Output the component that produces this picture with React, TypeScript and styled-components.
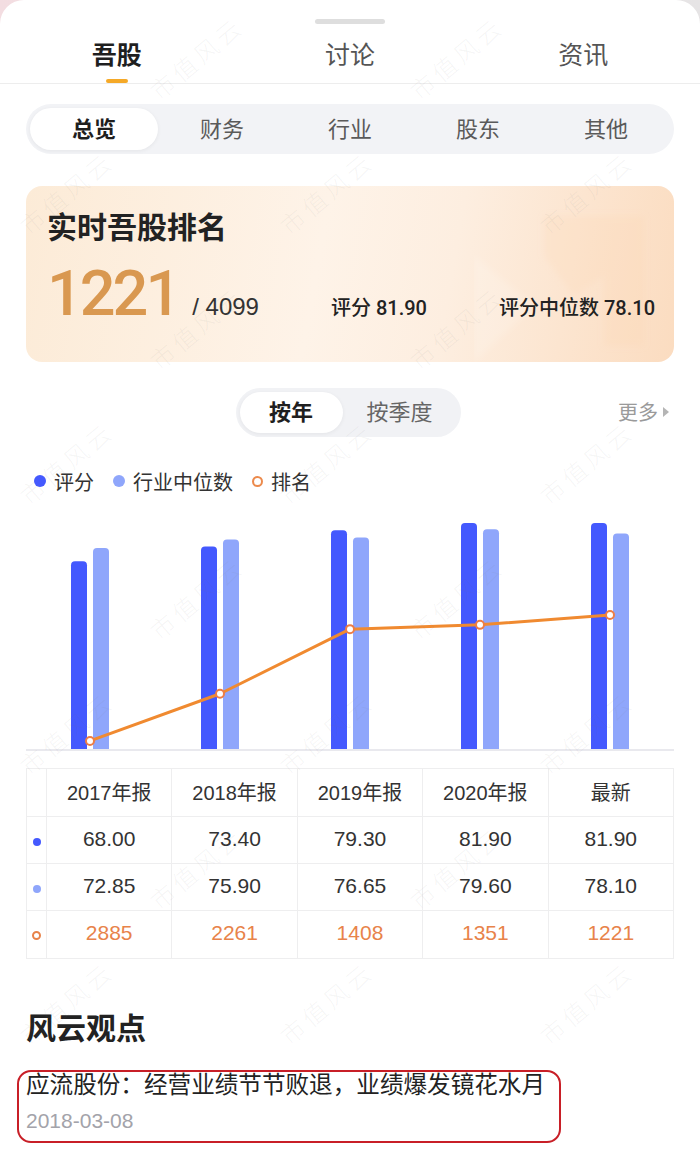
import React from 'react'
import styled, { createGlobalStyle } from 'styled-components'

const GlobalStyle = createGlobalStyle`
  html, body {
    margin: 0;
    padding: 0;
    background: linear-gradient(90deg, #f3dde1 0%, #efe6e8 50%, #e6e4e5 100%);
    font-family: "Liberation Sans", "Noto Sans CJK SC", sans-serif;
  }
  * { box-sizing: border-box; }
`

const Sheet = styled.div`
  position: relative;
  width: 700px;
  min-height: 1163px;
  background: #fff;
  border-radius: 24px 24px 0 0;
  padding-top: 19px;
  overflow: hidden;
`
const Handle = styled.div`
  width: 70px;
  height: 5px;
  margin: 0 auto;
  border-radius: 3px;
  background: #dedede;
`
const TabBar = styled.div`
  display: grid;
  grid-template-columns: repeat(3, 1fr);
  border-bottom: 1px solid #ededed;
`
const Tab = styled.div<{ active?: boolean }>`
  display: flex;
  flex-direction: column;
  align-items: center;
  padding-top: 14px;
  font-size: 25px;
  line-height: 34px;
  font-weight: ${p => (p.active ? 700 : 400)};
  color: ${p => (p.active ? '#1f1f1f' : '#555')};
`
const TabLine = styled.div<{ active?: boolean }>`
  width: 22px;
  height: 4px;
  margin-top: 7px;
  border-radius: 2px;
  background: ${p => (p.active ? '#f5a928' : 'transparent')};
`
const Segment = styled.div`
  display: grid;
  grid-template-columns: repeat(5, 1fr);
  height: 50px;
  margin: 20px 26px 0;
  padding: 4px;
  border-radius: 25px;
  background: #f2f3f6;
`
const SegItem = styled.div<{ active?: boolean }>`
  display: flex;
  align-items: center;
  justify-content: center;
  padding-bottom: 5px;
  border-radius: 21px;
  font-size: 22px;
  font-weight: ${p => (p.active ? 700 : 400)};
  color: ${p => (p.active ? '#1f1f1f' : '#5a5a5a')};
  background: ${p => (p.active ? '#fff' : 'transparent')};
  box-shadow: ${p => (p.active ? '0 1px 4px rgba(0,0,0,0.06)' : 'none')};
`
const RankCard = styled.div`
  position: relative;
  height: 176px;
  margin: 32px 26px 0;
  padding: 22px 19px 0 21px;
  border-radius: 16px;
  overflow: hidden;
  background: linear-gradient(100deg, #fcebd7 0%, #fef3e8 45%, #fdeee0 65%, #fbdcc0 100%);
`
const CardDeco = styled.svg`
  position: absolute;
  right: 0;
  top: 0;
`
const CardTitle = styled.div`
  position: relative;
  font-size: 30px;
  line-height: 40px;
  font-weight: 700;
  color: #222;
`
const CardRow = styled.div`
  position: relative;
  display: flex;
  align-items: baseline;
  justify-content: space-between;
  margin-top: 15px;
`
const RankGroup = styled.div`
  display: flex;
  align-items: baseline;
`
const RankNum = styled.span`
  font-family: Roboto, "Liberation Sans", sans-serif;
  font-size: 63px;
  line-height: 62px;
  font-weight: 500;
  letter-spacing: -3px;
  color: #d99850;
`
const RankTotal = styled.span`
  margin-left: 14px;
  font-size: 24px;
  color: #333;
`
const Stat = styled.span`
  font-family: Roboto, "Noto Sans CJK SC", sans-serif;
  font-size: 20px;
  font-weight: 500;
  color: #222;
`
const ToggleRow = styled.div`
  display: grid;
  grid-template-columns: 1fr auto 1fr;
  align-items: center;
  margin-top: 26px;
  padding: 0 30px 0 26px;
`
const Toggle = styled.div`
  grid-column: 2;
  display: flex;
  height: 49px;
  padding: 4px;
  border-radius: 25px;
  background: #f1f2f5;
`
const ToggleItem = styled.div<{ active?: boolean; w: number }>`
  display: flex;
  align-items: center;
  justify-content: center;
  width: ${p => p.w}px;
  padding-bottom: 5px;
  border-radius: 21px;
  font-size: 22px;
  font-weight: ${p => (p.active ? 700 : 400)};
  color: ${p => (p.active ? '#1f1f1f' : '#666')};
  background: ${p => (p.active ? '#fff' : 'transparent')};
  box-shadow: ${p => (p.active ? '0 1px 4px rgba(0,0,0,0.06)' : 'none')};
`
const More = styled.div`
  justify-self: end;
  display: flex;
  align-items: center;
  gap: 4px;
  padding-bottom: 2px;
  font-size: 20px;
  color: #9a9a9a;
`
const Legend = styled.div`
  display: flex;
  align-items: center;
  height: 24px;
  margin-top: 32px;
  padding-left: 34px;
  gap: 19px;
`
const LegendItem = styled.div`
  display: flex;
  align-items: center;
  gap: 8px;
  font-size: 20px;
  color: #333;
`
const Dot = styled.span<{ color: string; ring?: boolean; size?: number }>`
  display: inline-block;
  width: ${p => p.size || 12}px;
  height: ${p => p.size || 12}px;
  border-radius: 50%;
  background: ${p => (p.ring ? 'transparent' : p.color)};
  border: ${p => (p.ring ? `2px solid ${p.color}` : 'none')};
`
const Chart = styled.svg`
  display: block;
  margin: 12px 26px 0;
`
const Table = styled.table`
  width: 648px;
  margin: 17px 26px 0;
  border-collapse: collapse;
  table-layout: fixed;
  td {
    border: 1px solid #eeeeef;
    text-align: center;
    padding: 0 0 3px;
  }
`
const Row = styled.tr<{ h: number; color?: string; size?: number }>`
  height: ${p => p.h}px;
  font-size: ${p => p.size || 21}px;
  color: ${p => p.color || '#333'};
`
const Heading = styled.div`
  margin: 50px 26px 0;
  font-size: 30px;
  line-height: 40px;
  font-weight: 700;
  color: #222;
`
const Article = styled.div`
  width: 544px;
  margin: 21px 0 0 17px;
  padding: 0 8px 7px 7px;
  border: 2px solid #c81f27;
  border-radius: 14px;
`
const ArticleTitle = styled.div`
  font-size: 23.6px;
  line-height: 26px;
  color: #222;
`
const ArticleDate = styled.div`
  margin-top: 10px;
  font-size: 21px;
  line-height: 26px;
  color: #a3a3aa;
`
const Watermark = styled.div`
  position: absolute;
  inset: 0;
  overflow: hidden;
  pointer-events: none;
`
const Mark = styled.span`
  position: absolute;
  font-size: 24px;
  font-weight: 300;
  letter-spacing: 4px;
  white-space: nowrap;
  color: rgba(120, 120, 120, 0.07);
  transform: rotate(-40deg);
`

const years = ['2017年报', '2018年报', '2019年报', '2020年报', '最新']
const scores = [68.0, 73.4, 79.3, 81.9, 81.9]
const medians = [72.85, 75.9, 76.65, 79.6, 78.1]
const ranks = [2885, 2261, 1408, 1351, 1221]

const BLUE = '#4459fe'
const LIGHT = '#8fa6fb'
const ORANGE = '#f08a30'
const BASE = 244

const bar = (x: number, h: number) =>
  `M${x},${BASE} V${BASE - h + 4} Q${x},${BASE - h} ${x + 4},${BASE - h} H${x + 12} Q${x + 16},${BASE - h} ${x + 16},${BASE - h + 4} V${BASE} Z`

// watermark tiles, kept fully inside the page
const marks: { x: number; y: number }[] = []
for (let r = 0; r < 9; r++) {
  for (let c = 0; c < 4; c++) {
    const x = c * 260 + (r % 2) * 130 - 120
    const y = r * 135 + 40
    if (x >= 10 && x + 130 <= 690 && y >= 40 && y <= 1100) marks.push({ x, y })
  }
}

const App = () => {
  const points = ranks.map((v, i) => ({ x: 64 + i * 130, y: 110 + (v - 1221) * 0.0757 }))

  return (
    <>
      <GlobalStyle />
      <Sheet>
        <Handle />
        <TabBar>
          {['吾股', '讨论', '资讯'].map((t, i) => (
            <Tab key={t} active={i === 0}>
              {t}
              <TabLine active={i === 0} />
            </Tab>
          ))}
        </TabBar>

        <Segment>
          {['总览', '财务', '行业', '股东', '其他'].map((t, i) => (
            <SegItem key={t} active={i === 0}>
              {t}
            </SegItem>
          ))}
        </Segment>

        <RankCard>
          <CardDeco width='200' height='176' viewBox='0 0 200 176'>
            <defs>
              <filter id='soft'>
                <feGaussianBlur stdDeviation='3' />
              </filter>
            </defs>
            <g filter='url(#soft)'>
              <polygon points='70,30 170,30 170,160 130,160 130,90 100,110 70,70' fill='#f8d2ad' opacity='0.18' />
              <polygon points='0,70 60,120 0,176' fill='#fff' opacity='0.15' />
            </g>
          </CardDeco>
          <CardTitle>实时吾股排名</CardTitle>
          <CardRow>
            <RankGroup>
              <RankNum>1221</RankNum>
              <RankTotal>/ 4099</RankTotal>
            </RankGroup>
            <Stat>评分 81.90</Stat>
            <Stat>评分中位数 78.10</Stat>
          </CardRow>
        </RankCard>

        <ToggleRow>
          <Toggle>
            <ToggleItem active w={103}>按年</ToggleItem>
            <ToggleItem w={114}>按季度</ToggleItem>
          </Toggle>
          <More>
            更多
            <svg width='8' height='12' viewBox='0 0 8 12'>
              <path d='M1,1 L7,6 L1,11 Z' fill='#b5b5b5' />
            </svg>
          </More>
        </ToggleRow>

        <Legend>
          <LegendItem>
            <Dot color={BLUE} />
            评分
          </LegendItem>
          <LegendItem>
            <Dot color={LIGHT} />
            行业中位数
          </LegendItem>
          <LegendItem>
            <Dot color='#ec8a4c' ring size={11} />
            排名
          </LegendItem>
        </Legend>

        <Chart width='648' height='246' viewBox='0 0 648 246'>
          <line x1='0' y1={BASE + 1} x2='648' y2={BASE + 1} stroke='#e9e9ee' strokeWidth='2' />
          {scores.map((s, i) => (
            <g key={i}>
              <path d={bar(45 + i * 130, s * 2.76)} fill={BLUE} />
              <path d={bar(67 + i * 130, medians[i] * 2.76)} fill={LIGHT} />
            </g>
          ))}
          <polyline
            points={points.map(p => `${p.x},${p.y}`).join(' ')}
            fill='none'
            stroke={ORANGE}
            strokeWidth='3'
            strokeLinejoin='round'
          />
          {points.map((p, i) => (
            <circle key={i} cx={p.x} cy={p.y} r='4' fill='#fff' stroke='#ee7d45' strokeWidth='2' />
          ))}
        </Chart>

        <Table>
          <colgroup>
            <col style={{ width: 20 }} />
            {years.map(y => (
              <col key={y} />
            ))}
          </colgroup>
          <tbody>
            <Row h={48} size={20}>
              <td />
              {years.map(y => (
                <td key={y}>{y}</td>
              ))}
            </Row>
            <Row h={47}>
              <td>
                <Dot color={BLUE} size={8} />
              </td>
              {scores.map((v, i) => (
                <td key={i}>{v.toFixed(2)}</td>
              ))}
            </Row>
            <Row h={47}>
              <td>
                <Dot color={LIGHT} size={8} />
              </td>
              {medians.map((v, i) => (
                <td key={i}>{v.toFixed(2)}</td>
              ))}
            </Row>
            <Row h={48} color='#e8834a'>
              <td>
                <Dot color='#e8834a' ring size={9} />
              </td>
              {ranks.map((v, i) => (
                <td key={i}>{v}</td>
              ))}
            </Row>
          </tbody>
        </Table>

        <Heading>风云观点</Heading>
        <Article>
          <ArticleTitle>应流股份：经营业绩节节败退，业绩爆发镜花水月</ArticleTitle>
          <ArticleDate>2018-03-08</ArticleDate>
        </Article>

        <Watermark>
          {marks.map((m, i) => (
            <Mark key={i} style={{ left: m.x, top: m.y }}>
              市值风云
            </Mark>
          ))}
        </Watermark>
      </Sheet>
    </>
  )
}

export default App
